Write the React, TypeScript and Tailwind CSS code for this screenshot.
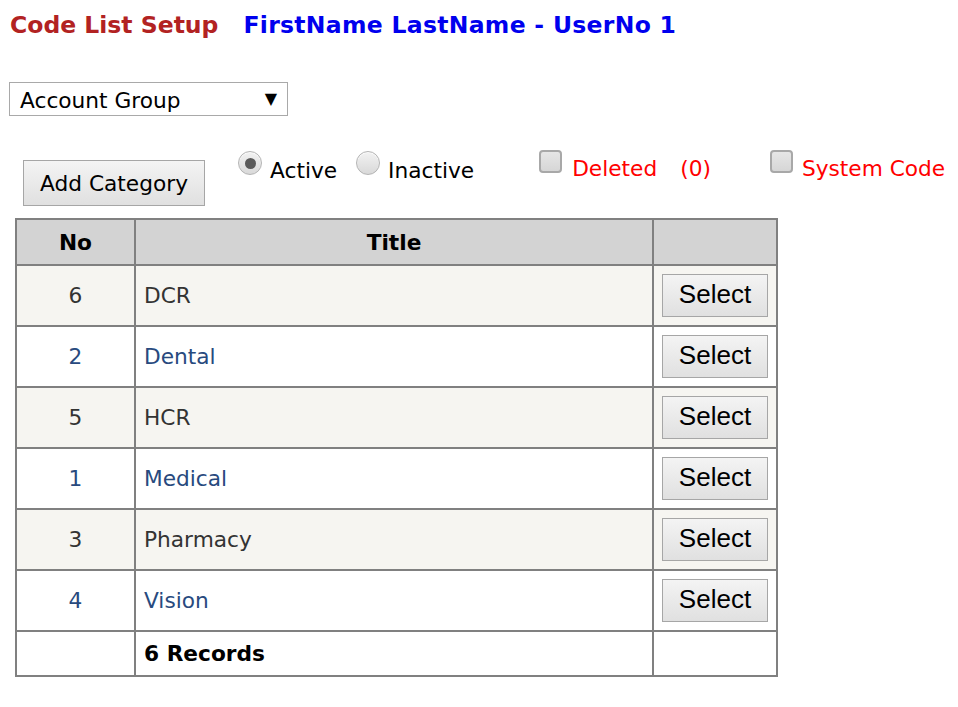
const rows = [
  { no: 6, title: 'DCR' },
  { no: 2, title: 'Dental' },
  { no: 5, title: 'HCR' },
  { no: 1, title: 'Medical' },
  { no: 3, title: 'Pharmacy' },
  { no: 4, title: 'Vision' },
];

const Radio = ({ checked }: { checked?: boolean }) => (
  <span className="flex h-[24px] w-[24px] items-center justify-center rounded-full border border-[#b4b4b4] bg-gradient-to-b from-[#f2f2f2] to-[#d9d9d9] shadow-[inset_0_1px_1px_rgba(255,255,255,0.8)]">
    {checked && <span className="h-[11px] w-[11px] rounded-full bg-[#5a5a5a]" />}
  </span>
);

const Checkbox = () => (
  <span className="block h-[23px] w-[23px] rounded-[4px] border-2 border-[#a8a8a8] bg-gradient-to-b from-[#e6e6e6] to-[#d6d6d6]" />
);

const App = () => (
  <div className="h-[707px] w-[958px] bg-white font-['DejaVu_Sans',sans-serif] text-[21.7px] text-black">
    <div className="flex pl-[10px] pt-[9px] text-[23.5px] font-bold leading-[32px]">
      <span className="text-[#b22222]">Code List Setup</span>
      <span className="ml-[25px] tracking-[0.3px] text-[#0000ee]">FirstName LastName - UserNo 1</span>
    </div>

    <div className="ml-[9px] mt-[41px] flex h-[34px] w-[279px] items-center justify-between border border-[#a9a9a9] pl-[10px] pr-[10px]">
      <span className="mt-[3px] leading-[24px]">Account Group</span>
      <span className="text-[16px] leading-none">▼</span>
    </div>

    <div className="mt-[34px] flex items-start">
      <button className="ml-[23px] mt-[10px] h-[46px] w-[182px] border border-[#a6a6a6] bg-gradient-to-b from-[#f4f4f4] to-[#e0e0e0] pt-[2px] text-[21.7px] leading-[24px]">
        Add Category
      </button>
      <label className="ml-[33px] mt-[1px] flex items-start">
        <Radio checked />
        <span className="ml-[8px] mt-[8px] leading-[24px]">Active</span>
      </label>
      <label className="ml-[19px] mt-[1px] flex items-start">
        <Radio />
        <span className="ml-[8px] mt-[8px] leading-[24px]">Inactive</span>
      </label>
      <label className="ml-[65px] flex items-start text-[#ff0000]">
        <Checkbox />
        <span className="ml-[10px] mt-[7px] leading-[24px]">Deleted</span>
        <span className="ml-[23px] mt-[7px] leading-[24px]">(0)</span>
      </label>
      <label className="ml-[59px] flex items-start text-[#ff0000]">
        <Checkbox />
        <span className="ml-[9px] mt-[7px] leading-[24px]">System Code</span>
      </label>
    </div>

    <table className="ml-[15px] mt-[12px] w-[763px] border-collapse border-2 border-[#808080]">
      <thead>
        <tr className="h-[46px] bg-[#d3d3d3]">
          <th className="w-[119px] border-2 border-[#808080] pt-[2px] font-bold">No</th>
          <th className="w-[518px] border-2 border-[#808080] pt-[2px] font-bold">Title</th>
          <th className="border-2 border-[#808080]" />
        </tr>
      </thead>
      <tbody>
        {rows.map((r, i) => {
          const odd = i % 2 === 0;
          return (
            <tr key={r.no} className={`h-[61px] ${odd ? 'bg-[#f6f5f1] text-[#333333]' : 'bg-white text-[#284a7e]'}`}>
              <td className="border-2 border-[#808080] pt-[2px] text-center">{r.no}</td>
              <td className="border-2 border-[#808080] pl-[8px] pt-[2px]">{r.title}</td>
              <td className="border-2 border-[#808080] text-center">
                <button className="h-[43px] w-[106px] border border-[#a6a6a6] bg-gradient-to-b from-[#f4f4f4] to-[#e0e0e0] pb-[3px] font-['Liberation_Sans',Arial,sans-serif] text-[26px] leading-none text-black">
                  Select
                </button>
              </td>
            </tr>
          );
        })}
        <tr className="h-[45px]">
          <td className="border-2 border-[#808080]" />
          <td className="border-2 border-[#808080] pl-[8px] pt-[2px] font-bold">6 Records</td>
          <td className="border-2 border-[#808080]" />
        </tr>
      </tbody>
    </table>
  </div>
);

export default App;
